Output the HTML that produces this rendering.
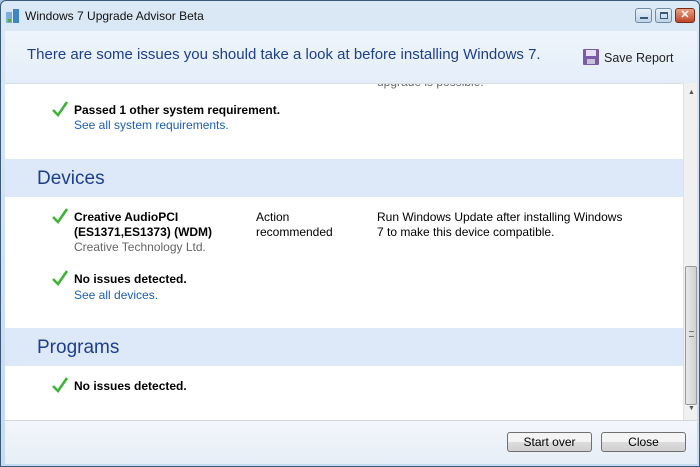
<!DOCTYPE html>
<html><head><meta charset="utf-8"><style>
*{margin:0;padding:0;box-sizing:border-box}
body{width:700px;height:467px;overflow:hidden;font-family:"Liberation Sans",Tahoma,sans-serif;font-size:12px;background:#a9c6e3;position:relative}
.win{position:absolute;left:0;top:0;width:700px;height:467px;border:1px solid #3b5a7a;border-radius:6px 6px 0 0;background:linear-gradient(#dbe8f5,#c6dbef);}
.title{position:absolute;left:24px;top:8px;font-size:12px;color:#111}
.hdr{position:absolute;left:4px;top:30px;width:692px;height:52px;background:linear-gradient(#eef4fb,#e4eef9);}
.hdr .msg{position:absolute;left:22px;top:15px;font-size:15px;color:#1e3f8a}
.hdr .save{position:absolute;left:599px;top:20px;font-size:12.5px;color:#222}
.content{position:absolute;left:4px;top:82px;width:678px;height:337px;background:#fff;overflow:hidden;border-top:1px solid #d8dde4}
.band{position:absolute;left:0;width:678px;height:38px;background:#dde9f8}
.band span{position:absolute;left:32px;top:9px;font-size:19px;color:#1d3f8c}
.t{position:absolute;font-size:12px;color:#000;line-height:15px}
.b{font-weight:bold}
.g{color:#666}
.l{color:#1c5fb0}
.chk{position:absolute;width:16px;height:16px}
.sb{position:absolute;left:682px;top:82px;width:14px;height:337px;background:#f0f0f0;border-left:1px solid #e0e0e0}
.thumb{position:absolute;left:1px;top:183px;width:12px;height:139px;background:linear-gradient(90deg,#e8e8e8,#d0d0d0);border:1px solid #9a9a9a;border-radius:2px}
.foot{position:absolute;left:4px;top:419px;width:692px;height:44px;background:linear-gradient(#f3f6fa,#e6eef7);border-top:1px solid #d0d6de}
.btn{position:absolute;top:11px;width:85px;height:20px;border:1px solid #707070;border-radius:3px;background:linear-gradient(#f4f4f4 50%,#dcdcdc 50%,#d0d0d0);font-size:12px;text-align:center;line-height:18px;color:#000}
.wb{position:absolute;top:7px;width:17px;height:15px;border:1px solid #6d8aa8;border-radius:3px;background:linear-gradient(#e7eff8,#bfd3e8)}
</style></head><body>
<div class="win">
<svg style="position:absolute;left:5px;top:8px" width="14" height="15"><rect x="0" y="3" width="6" height="11" fill="#7ab0d8"/><rect x="7" y="0" width="6" height="14" fill="#3f86c4"/><rect x="2" y="10" width="3" height="3" fill="#58a848"/></svg>
<div class="title">Windows 7 Upgrade Advisor Beta</div>
<div class="wb" style="left:634px"><div style="position:absolute;left:4px;top:8px;width:8px;height:2px;background:#3b5a7a"></div></div>
<div class="wb" style="left:654px"><div style="position:absolute;left:4px;top:3px;width:8px;height:7px;border:1px solid #3b5a7a;border-top-width:2px"></div></div>
<div class="wb" style="left:674px;width:20px;background:linear-gradient(#e8a080,#c0442a);border-color:#7a2a1a;color:#fff;font-weight:bold;font-size:11px;text-align:center;line-height:13px">✕</div>
<div class="hdr"><div class="msg">There are some issues you should take a look at before installing Windows 7.</div>
<svg style="position:absolute;left:578px;top:18px" width="16" height="16"><rect x="0" y="0" width="16" height="16" rx="1" fill="#7a5ba8"/><rect x="3" y="1" width="10" height="6" fill="#e8e0f0"/><rect x="4" y="10" width="8" height="5" fill="#c8c0d8"/></svg>
<div class="save">Save Report</div></div>
<div class="content">
<div class="t g" style="left:372px;top:-9px">upgrade is possible.</div>
<svg class="chk" style="left:47px;top:17px" viewBox="0 0 16 16"><path d="M1 9 L6 14 L15 1" stroke="#3fb33a" stroke-width="2.6" fill="none"/></svg>
<div class="t b" style="left:69px;top:19px">Passed 1 other system requirement.</div>
<div class="t l" style="left:69px;top:34px">See all system requirements.</div>
<div class="band" style="top:75px"><span>Devices</span></div>
<svg class="chk" style="left:47px;top:124px" viewBox="0 0 16 16"><path d="M1 9 L6 14 L15 1" stroke="#3fb33a" stroke-width="2.6" fill="none"/></svg>
<div class="t b" style="left:69px;top:126px">Creative AudioPCI<br>(ES1371,ES1373) (WDM)</div>
<div class="t g" style="left:69px;top:156px">Creative Technology Ltd.</div>
<div class="t" style="left:251px;top:126px">Action<br>recommended</div>
<div class="t" style="left:372px;top:126px">Run Windows Update after installing Windows<br>7 to make this device compatible.</div>
<svg class="chk" style="left:47px;top:186px" viewBox="0 0 16 16"><path d="M1 9 L6 14 L15 1" stroke="#3fb33a" stroke-width="2.6" fill="none"/></svg>
<div class="t b" style="left:69px;top:188px">No issues detected.</div>
<div class="t l" style="left:69px;top:204px">See all devices.</div>
<div class="band" style="top:244px"><span>Programs</span></div>
<svg class="chk" style="left:47px;top:293px" viewBox="0 0 16 16"><path d="M1 9 L6 14 L15 1" stroke="#3fb33a" stroke-width="2.6" fill="none"/></svg>
<div class="t b" style="left:69px;top:295px">No issues detected.</div>
</div>
<div class="sb"><div style="position:absolute;left:4px;top:6px;font-size:7px;color:#555">▲</div><div class="thumb"><div style="position:absolute;left:3px;top:64px;width:5px;height:6px;border-top:1px solid #777;border-bottom:1px solid #777"></div></div><div style="position:absolute;left:4px;top:322px;font-size:7px;color:#555">▼</div></div>
<div class="foot"><div class="btn" style="left:502px">Start over</div><div class="btn" style="left:596px">Close</div></div>
</div>
</body></html>
